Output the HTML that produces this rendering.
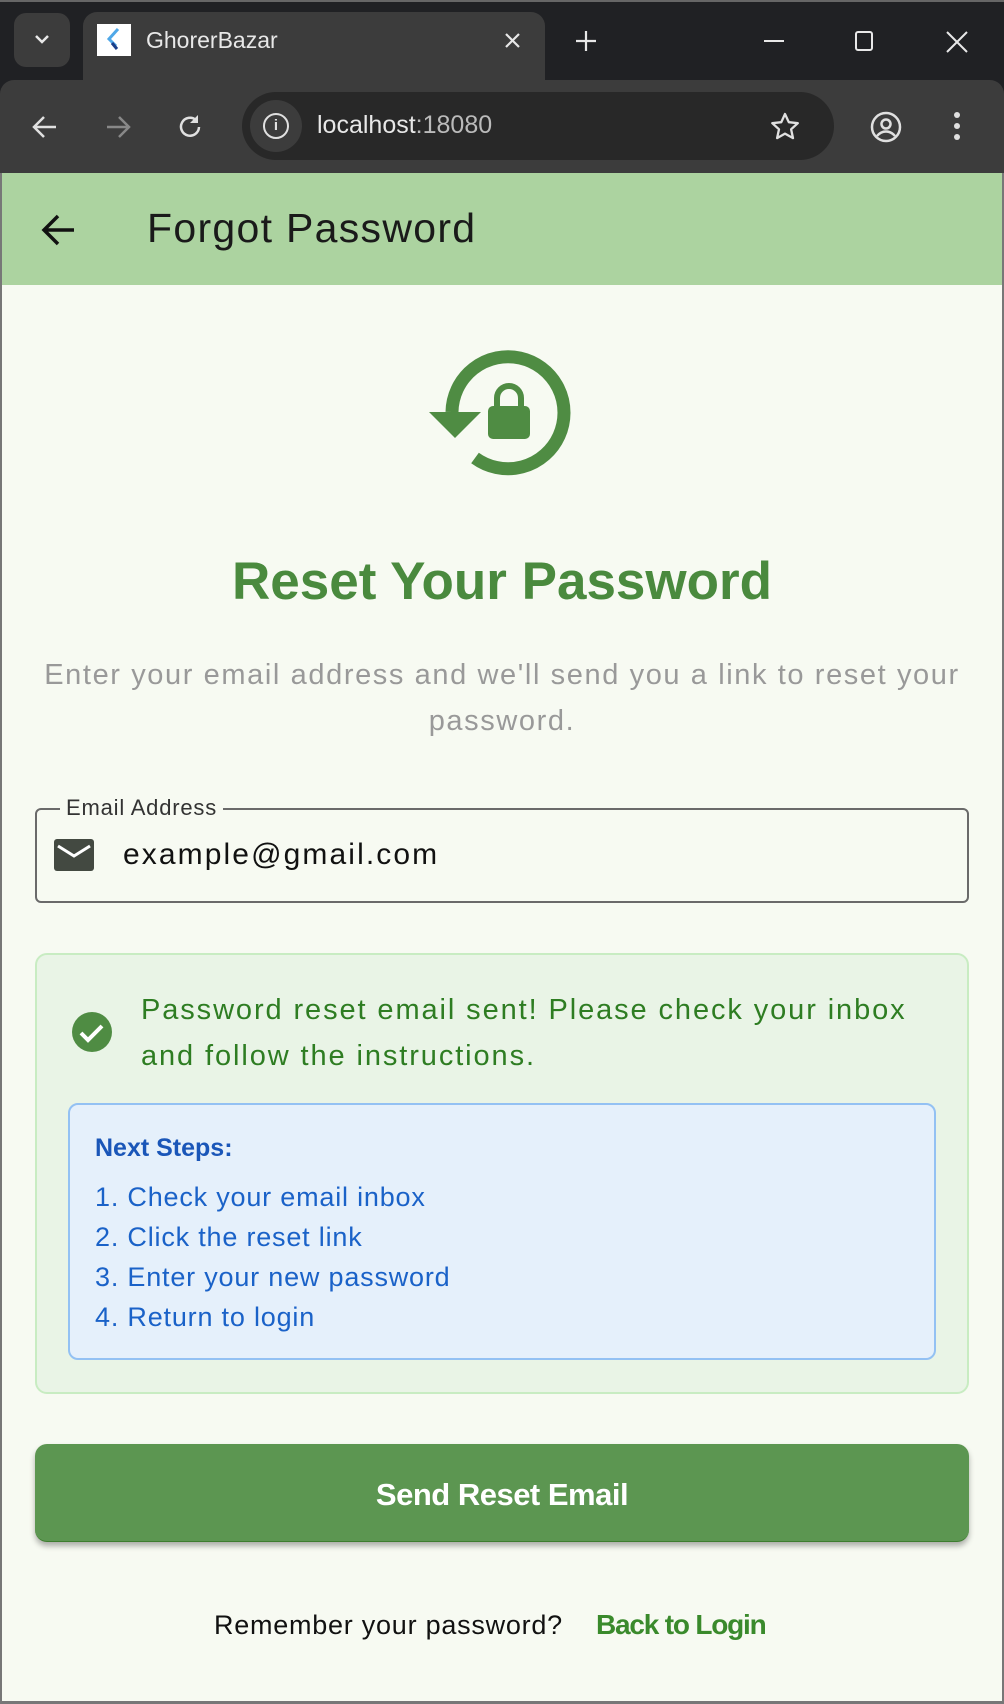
<!DOCTYPE html>
<html><head><meta charset="utf-8"><style>
*{margin:0;padding:0;box-sizing:border-box}
body{width:1004px;height:1704px;overflow:hidden;background:#f7faf2;font-family:"Liberation Sans",sans-serif;position:relative}
.a{position:absolute;white-space:nowrap}
</style></head><body>
<div class="a" style="left:0;top:0;width:1004px;height:174px;background:#202124"></div>
<div class="a" style="left:0;top:0;width:1004px;height:2px;background:#666"></div>
<div class="a" style="left:14px;top:13px;width:56px;height:54px;background:#3c3c3c;border-radius:12px"></div>
<svg class="a" style="left:32px;top:32px" width="20" height="16"><path d="M4 4l6 6 6-6" stroke="#e8e8e8" stroke-width="2.5" fill="none"/></svg>
<div class="a" style="left:83px;top:12px;width:462px;height:70px;background:#3c3c3c;border-radius:14px 14px 0 0"></div>
<div class="a" style="left:0;top:80px;width:1004px;height:94px;background:#3c3c3c;border-radius:14px 14px 0 0"></div>
<div class="a" style="left:97px;top:24px;width:34px;height:32px;background:#fff"></div>
<svg class="a" style="left:100px;top:26px" width="28" height="28"><path d="M18 3L9 13l7 7" stroke="#4fa8e8" stroke-width="3" fill="none"/><path d="M12 17l5 6" stroke="#1a3f8a" stroke-width="3"/></svg>
<div class="a" style="left:146px;top:27px;font-size:23px;color:#e8e8e8">GhorerBazar</div>
<svg class="a" style="left:503px;top:31px" width="20" height="20"><path d="M3 3l13 13M16 3L3 16" stroke="#e8e8e8" stroke-width="2.2"/></svg>
<svg class="a" style="left:574px;top:29px" width="24" height="24"><path d="M12 2v20M2 12h20" stroke="#e8e8e8" stroke-width="2.2"/></svg>
<div class="a" style="left:764px;top:40px;width:20px;height:2px;background:#e8e8e8"></div>
<div class="a" style="left:855px;top:31px;width:18px;height:20px;border:2px solid #e8e8e8;border-radius:3px"></div>
<svg class="a" style="left:945px;top:30px" width="24" height="24"><path d="M2 2l20 20M22 2L2 22" stroke="#e8e8e8" stroke-width="2"/></svg>
<svg class="a" style="left:30px;top:112px" width="30" height="30"><path d="M26 15H5M14 5L4 15l10 10" stroke="#e0e0e0" stroke-width="2.5" fill="none"/></svg>
<svg class="a" style="left:103px;top:112px" width="30" height="30"><path d="M4 15h21M16 5l10 10-10 10" stroke="#888" stroke-width="2.5" fill="none"/></svg>
<svg class="a" style="left:176px;top:112px" width="30" height="30"><path d="M23 15a9 9 0 1 1-3-7" stroke="#e0e0e0" stroke-width="2.5" fill="none"/><path d="M22 3v8h-8" fill="#e0e0e0"/></svg>
<div class="a" style="left:242px;top:92px;width:592px;height:68px;background:#282828;border-radius:34px"></div>
<div class="a" style="left:250px;top:100px;width:52px;height:52px;background:#3c3c3c;border-radius:26px"></div>
<div class="a" style="left:263px;top:113px;width:26px;height:26px;border:2.5px solid #e0e0e0;border-radius:50%;color:#e0e0e0;font-size:15px;font-weight:bold;text-align:center;line-height:21px">i</div>
<div class="a" style="left:317px;top:111px;font-size:25px;color:#e8e8e8">localhost<span style="color:#bbb">:18080</span></div>
<svg class="a" style="left:769px;top:111px" width="32" height="32"><path d="M16 3l3.8 8.2 9 1-6.7 6.1 1.9 8.8L16 22.6l-7.9 4.5 1.9-8.8L3.3 12.2l9-1z" stroke="#e0e0e0" stroke-width="2.3" fill="none" stroke-linejoin="round"/></svg>
<svg class="a" style="left:869px;top:110px" width="34" height="34"><circle cx="17" cy="17" r="14" stroke="#e0e0e0" stroke-width="2.5" fill="none"/><circle cx="17" cy="14" r="4.5" stroke="#e0e0e0" stroke-width="2.5" fill="none"/><path d="M8 26c5-6 13-6 18 0" stroke="#e0e0e0" stroke-width="2.5" fill="none"/></svg>
<div class="a" style="left:954px;top:112px;width:6px;height:6px;background:#e0e0e0;border-radius:3px"></div>
<div class="a" style="left:954px;top:123px;width:6px;height:6px;background:#e0e0e0;border-radius:3px"></div>
<div class="a" style="left:954px;top:134px;width:6px;height:6px;background:#e0e0e0;border-radius:3px"></div>
<div class="a" style="left:0;top:173px;width:1004px;height:112px;background:#acd3a0"></div>
<svg class="a" style="left:38px;top:210px" width="40" height="40"><path d="M36 20H6M20 6L6 20l14 14" stroke="#111" stroke-width="3.5" fill="none"/></svg>
<div class="a" style="left:147px;top:205px;font-size:41px;color:#1a1a1a;letter-spacing:1.3px">Forgot Password</div>
<div class="a" style="left:0;top:173px;width:2px;height:1531px;background:#777"></div>
<div class="a" style="left:1002px;top:173px;width:2px;height:1531px;background:#777"></div>
<div class="a" style="left:0;top:1701px;width:1004px;height:3px;background:#777"></div>
<svg class="a" style="left:420px;top:345px" width="180" height="135" viewBox="420 345 180 135">
<path d="M452 412 A56 56 0 1 1 475 458" stroke="#4f8c43" stroke-width="13" fill="none"/>
<path d="M429 412h52l-26 26z" fill="#4f8c43"/>
<rect x="488" y="406" width="42" height="33" rx="5" fill="#4f8c43"/>
<path d="M497 407v-9a12 12 0 0 1 24 0v9" stroke="#4f8c43" stroke-width="6" fill="none"/>
</svg>
<div class="a" style="left:0;width:1004px;top:551px;text-align:center;font-size:53px;font-weight:bold;color:#4a8a3e">Reset Your Password</div>
<div class="a" style="left:0;width:1004px;top:652px;text-align:center;font-size:29px;color:#999;line-height:46px;letter-spacing:1.6px">Enter your email address and we'll send you a link to reset your<br>password.</div>
<div class="a" style="left:35px;top:808px;width:934px;height:95px;border:2px solid #6a6a6a;border-radius:6px"></div>
<div class="a" style="left:60px;top:795px;padding:0 6px;background:#f7faf2;font-size:22px;color:#333;letter-spacing:0.8px">Email Address</div>
<svg class="a" style="left:54px;top:839px" width="40" height="32"><rect x="0" y="0" width="40" height="32" rx="3" fill="#434941"/><path d="M4 7l16 10 16-10" stroke="#fff" stroke-width="3" fill="none"/></svg>
<div class="a" style="left:123px;top:838px;font-size:30px;color:#111;letter-spacing:2.1px">example@gmail.com</div>
<div class="a" style="left:35px;top:953px;width:934px;height:441px;background:#e9f4e6;border:2px solid #c8ecc2;border-radius:12px"></div>
<svg class="a" style="left:72px;top:1012px" width="40" height="40"><circle cx="20" cy="20" r="20" fill="#4f8c43"/><path d="M9 21l7 7 14-14" stroke="#fff" stroke-width="4" fill="none"/></svg>
<div class="a" style="left:141px;top:987px;font-size:29px;color:#2e7d22;line-height:46px;letter-spacing:1.9px">Password reset email sent! Please check your inbox<br>and follow the instructions.</div>
<div class="a" style="left:68px;top:1103px;width:868px;height:257px;background:#e5f0fb;border:2px solid #93c1f3;border-radius:10px"></div>
<div class="a" style="left:95px;top:1134px;font-size:25px;font-weight:bold;color:#1a56b8">Next Steps:</div>
<div class="a" style="left:95px;top:1177px;font-size:27px;color:#1a62c8;line-height:40px;letter-spacing:0.8px">1. Check your email inbox<br>2. Click the reset link<br>3. Enter your new password<br>4. Return to login</div>
<div class="a" style="left:35px;top:1444px;width:934px;height:98px;background:#5c9651;border-radius:12px;box-shadow:0 4px 6px rgba(0,0,0,0.3);border-bottom:1px solid #3d7d2f"></div>
<div class="a" style="left:0;width:1004px;top:1477px;text-align:center;font-size:31px;font-weight:bold;color:#fff;letter-spacing:-0.5px">Send Reset Email</div>
<div class="a" style="left:214px;top:1610px;font-size:27px;color:#111;letter-spacing:0.75px">Remember your password?</div>
<div class="a" style="left:596px;top:1609px;font-size:28px;font-weight:bold;color:#3a8a2c;letter-spacing:-1.2px">Back to Login</div>
</body></html>
